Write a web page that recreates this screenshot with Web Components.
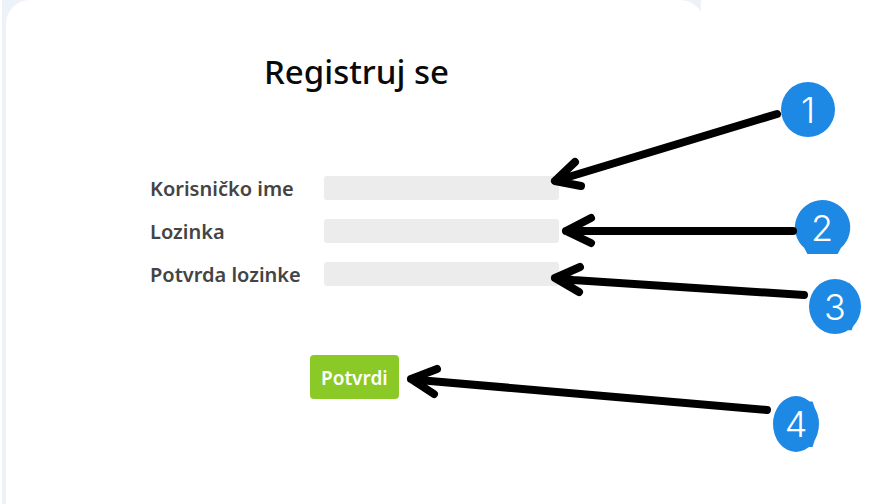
<!DOCTYPE html>
<html lang="sr-Latn">
<head>
<meta charset="utf-8">
<meta name="viewport" content="width=device-width, initial-scale=1">
<title>Registruj se</title>
<style>
  html, body { margin: 0; background: #fff; }
  body { position: relative; min-height: 100vh; overflow: hidden; font-family: "Noto Sans", "Open Sans", sans-serif; }
</style>
</head>
<body>
<register-card>
  <span slot="title">Registruj se</span>
  <form-field label="Korisničko ime" type="text"></form-field>
  <form-field label="Lozinka" type="password"></form-field>
  <form-field label="Potvrda lozinke" type="password"></form-field>
  <submit-button slot="action">Potvrdi</submit-button>
</register-card>
<callout-layer>
  <callout-badge style="left:781px;top:82px;width:54px;height:55px">1</callout-badge>
  <callout-badge style="left:794px;top:200px;width:56px;height:55px" edge="bottom">2</callout-badge>
  <callout-badge style="left:809px;top:279px;width:52px;height:55px" edge="corner">3</callout-badge>
  <callout-badge style="left:773px;top:396px;width:46px;height:56px" edge="right">4</callout-badge>
</callout-layer>
<script>
const define = (name, html, setup) => customElements.define(name, class extends HTMLElement {
  connectedCallback() {
    if (this.shadowRoot) return;
    this.attachShadow({ mode: "open" }).innerHTML = html;
    if (setup) setup(this, this.shadowRoot);
  }
});

define("register-card", `
  <style>
    :host { display: block; margin: 0 183px 0 2px; background: #edf1f8; overflow: hidden; }
    form { box-sizing: border-box; min-height: 100vh; margin: 0 -3px 0 4px; padding: 48px 142px 80px 144px; border-radius: 24px 24px 0 0; background: #fff; }
    h1 { margin: 0; padding-left: 114px; font-size: 33px; line-height: 48px; font-weight: 500; color: #0a0a0a; white-space: nowrap; }
    .fields { display: grid; gap: 18px; padding-top: 78px; }
    .action { display: flex; padding: 70px 0 0 160px; }
  </style>
  <form>
    <h1><slot name="title"></slot></h1>
    <div class="fields"><slot></slot></div>
    <div class="action"><slot name="action"></slot></div>
  </form>`);

define("form-field", `
  <style>
    :host { display: grid; grid-template-columns: 174px 235px; align-items: center; height: 25px; }
    label { padding-top: 2px; font-size: 20px; line-height: 25px; font-weight: 600; color: #444; white-space: nowrap; }
    input { box-sizing: border-box; width: 100%; height: 24px; margin: 0; padding: 0 8px; border: 0; border-radius: 3px; background: #ececec; font: 16px "Noto Sans", sans-serif; }
  </style>
  <label for="control"></label><input id="control">`, (host, root) => {
  root.querySelector("label").textContent = host.getAttribute("label");
  root.querySelector("input").type = host.getAttribute("type");
});

define("submit-button", `
  <style>
    button { display: block; margin: 0; padding: 10px 11px 8px; border: 0; border-radius: 4px; background: #8bca26; color: #fff; font: 600 19px/26px "Noto Sans", "Open Sans", sans-serif; }
  </style>
  <button type="button"><slot></slot></button>`);

define("callout-badge", `
  <style>
    :host { position: absolute; display: grid; place-items: center; color: #fff; font: 300 36px/40px Inter, sans-serif; }
    svg { position: absolute; inset: 0; width: 100%; height: 100%; overflow: visible; fill: #1e88e5; }
    span { position: relative; }
  </style>
  <svg viewBox="0 0 100 100" preserveAspectRatio="none" aria-hidden="true"><path/></svg>
  <span><slot></slot></span>`, (host, root) => {
  const circle = "M50 0A50 50 0 1 1 50 100A50 50 0 1 1 50 0Z";
  const shapes = {
    bottom: "M50 0A50 50 0 0 1 84 87L78 98H24L18 87A50 50 0 0 1 50 0Z",
    corner: circle + "M70 8L77 7L86 15L80 30ZM87 80L82 93L70 93L70 80Z",
    right: circle + "M72 10H86L92 24V75L86 91H72Z"
  };
  root.querySelector("path").setAttribute("d", shapes[host.getAttribute("edge")] || circle);
});

define("callout-layer", `
  <style>
    :host { position: absolute; inset: 0; pointer-events: none; }
    svg { position: absolute; inset: 0; width: 100%; height: 100%; }
    path { fill: none; stroke: #000; stroke-width: 8; stroke-linecap: round; stroke-linejoin: round; }
  </style>
  <slot></slot>
  <svg aria-hidden="true">
    <path d="M777 114L575 175L555 181M575 162L555 181L581 186"/>
    <path d="M793 231H566M591 218L566 231L591 243"/>
    <path d="M804 295L573 280L555 278M580 267L555 278L579 292"/>
    <path d="M767 410L430 381L411 379M437 369L411 379L434 394"/>
  </svg>`);
</script>
</body>
</html>
